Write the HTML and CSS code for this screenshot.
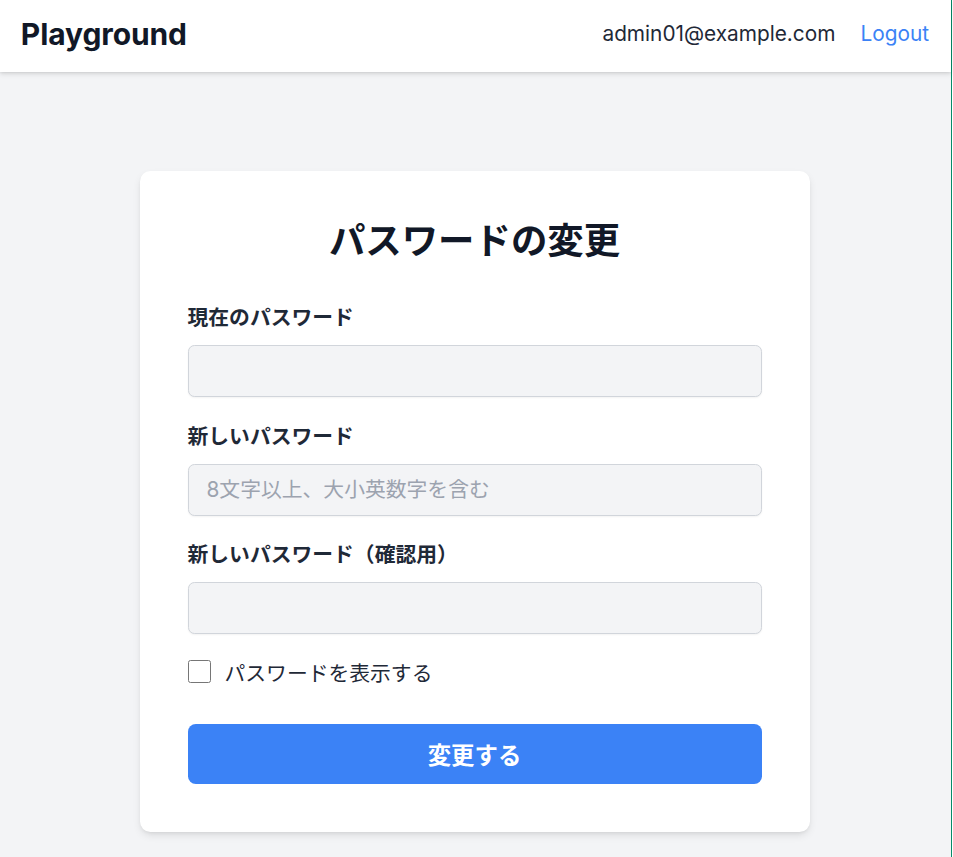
FILE: index.html
```html
<!DOCTYPE html>
<html lang="ja">
<head>
<meta charset="utf-8">
<title>Playground</title>
<link rel="stylesheet" href="styles.css">
</head>
<body>
<div class="app">
  <header class="topbar">
    <div class="brand">Playground</div>
    <nav class="user">
      <span class="email">admin01@example.com</span>
      <a class="logout" href="#">Logout</a>
    </nav>
  </header>
  <main class="main">
    <form class="card">
      <h1 class="title">パスワードの変更</h1>
      <div class="field">
        <label class="label" for="cur">現在のパスワード</label>
        <input class="input" id="cur" type="password">
      </div>
      <div class="field">
        <label class="label" for="new">新しいパスワード</label>
        <input class="input" id="new" type="password" placeholder="8文字以上、大小英数字を含む">
      </div>
      <div class="field">
        <label class="label" for="conf">新しいパスワード（確認用）</label>
        <input class="input" id="conf" type="password">
      </div>
      <label class="check">
        <input class="checkbox" type="checkbox">
        <span>パスワードを表示する</span>
      </label>
      <button class="submit" type="button">変更する</button>
    </form>
  </main>
</div>
</body>
</html>
```
FILE: styles.css
```css
html {
  background: #ffffff;
}
body {
  margin: 0;
  font-family: Inter, "Noto Sans CJK JP", sans-serif;
  color: #111827;
}
.app {
  min-height: 100vh;
  background: #f3f4f6;
  border-right: 1px solid #078a68;
  margin-right: 1px;
}
.topbar {
  height: 72px;
  box-sizing: border-box;
  padding: 0 22px 5px 20.8px;
  background: #ffffff;
  display: flex;
  align-items: center;
  justify-content: space-between;
  box-shadow: 0 2px 5px rgba(0, 0, 0, 0.12), 0 1px 2px rgba(0, 0, 0, 0.06);
  position: relative;
}
.brand {
  font-size: 30px;
  font-weight: 700;
  color: #111827;
  letter-spacing: -0.1px;
}
.user {
  display: flex;
  align-items: center;
  gap: 25px;
  font-size: 20.8px;
}
.email {
  color: #1f2937;
}
.logout {
  color: #3b82f6;
  text-decoration: none;
}
.main {
  display: flex;
  justify-content: center;
  padding: 99px 2px 24px 0;
}
.card {
  width: 670px;
  box-sizing: border-box;
  padding: 48px;
  background: #ffffff;
  border-radius: 10.4px;
  box-shadow: 0 4px 8px -1px rgba(0, 0, 0, 0.1), 0 2px 4px -2px rgba(0, 0, 0, 0.1);
  display: flex;
  flex-direction: column;
}
.title {
  margin: 0 0 41px;
  font-size: 36.4px;
  line-height: 44px;
  font-weight: 700;
  text-align: center;
  color: #111827;
}
.field {
  display: flex;
  flex-direction: column;
  margin-bottom: 25.5px;
}
.label {
  font-size: 20.8px;
  line-height: 27px;
  font-weight: 700;
  color: #1f2937;
  margin-bottom: 14px;
}
.input {
  height: 52px;
  box-sizing: border-box;
  border: 1px solid #d1d5db;
  border-radius: 6.5px;
  background: #f3f4f6;
  padding: 0 18px;
  font-family: Inter, "Noto Sans CJK JP", sans-serif;
  font-size: 20.8px;
  color: #111827;
  box-shadow: 0 1px 2px rgba(0, 0, 0, 0.05);
  outline: none;
}
.input::placeholder {
  color: #9ca3af;
}
.check {
  display: flex;
  align-items: center;
  gap: 14px;
  height: 24px;
  font-size: 20.8px;
  color: #1f2937;
  margin-bottom: 40px;
}
.checkbox {
  width: 23px;
  height: 23px;
  margin: 0;
}
.submit {
  height: 60px;
  border: none;
  border-radius: 7.8px;
  background: #3b82f6;
  color: #ffffff;
  font-family: Inter, "Noto Sans CJK JP", sans-serif;
  font-size: 23.4px;
  font-weight: 700;
  cursor: pointer;
}
```
